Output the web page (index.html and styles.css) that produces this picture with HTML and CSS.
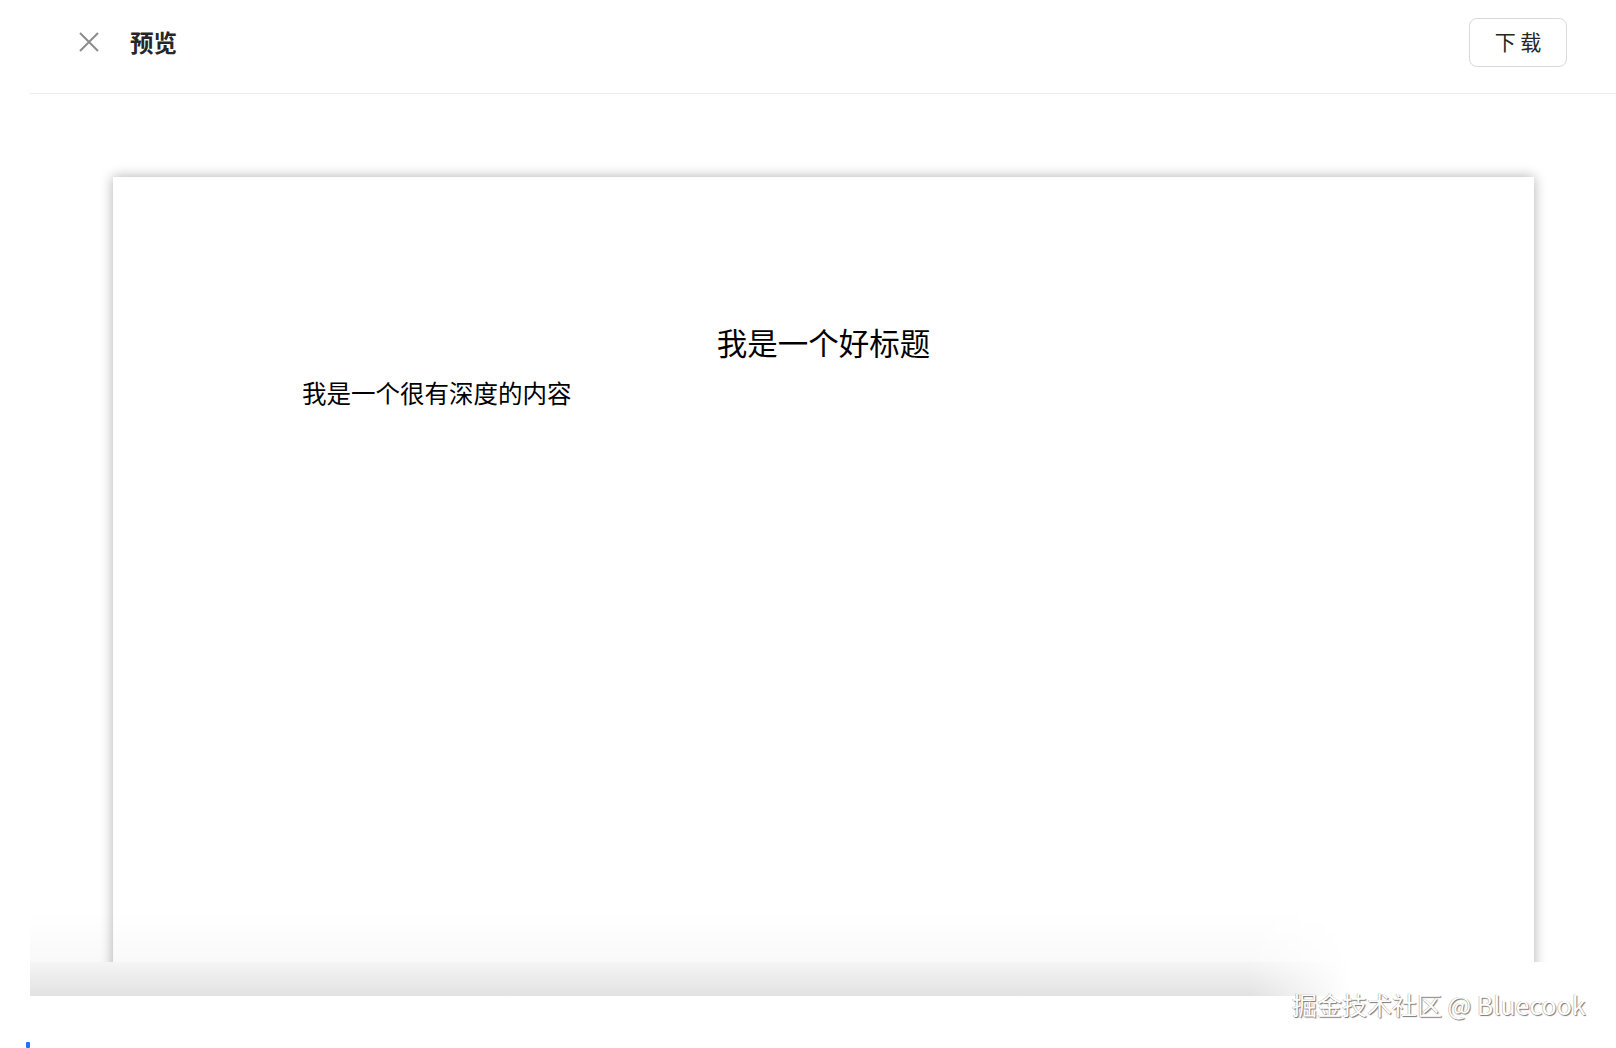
FILE: index.html
```html
<!DOCTYPE html>
<html lang="zh-CN">
<head>
  <meta charset="UTF-8">
  <title>预览</title>
  <link rel="stylesheet" href="styles.css">
</head>
<body>
  <div class="drawer">
    <header class="drawer-head">
      <div class="head-left">
        <button class="close" aria-label="关闭">
          <svg width="20" height="20" viewBox="0 0 20 20"><path d="M1 1L19 19M19 1L1 19" stroke="#8c8c8c" stroke-width="2" fill="none"/></svg>
        </button>
        <span class="title">预览</span>
      </div>
      <button class="download">下 载</button>
    </header>
    <main class="drawer-body">
      <div class="paper">
        <h1>我是一个好标题</h1>
        <p>我是一个很有深度的内容</p>
      </div>
    </main>
    <div class="drawer-foot"></div>
  </div>
  <div class="watermark">掘金技术社区 @ Bluecook</div>
  <span class="blue-mark"></span>
</body>
</html>
```

FILE: styles.css
```css
* { margin: 0; padding: 0; box-sizing: border-box; }
body {
  font-family: "Noto Sans CJK SC", "Noto Sans", sans-serif;
  background: #fff;
  color: #000;
  width: 1616px;
  height: 1048px;
  overflow: hidden;
  position: relative;
}
.drawer {
  margin-left: 30px;
}
.drawer-head {
  height: 94px;
  display: flex;
  align-items: center;
  justify-content: space-between;
  padding: 0 49px 9px 49px;
  border-bottom: 1px solid #ededed;
}
.head-left {
  display: flex;
  align-items: center;
  gap: 31px;
}
.close {
  border: none;
  background: none;
  display: flex;
  cursor: pointer;
}
.title {
  font-size: 23.5px;
  font-weight: bold;
  color: #262626;
}
.download {
  width: 98px;
  height: 49px;
  border: 1.5px solid #d9d9d9;
  border-radius: 8px;
  background: #fff;
  font-family: inherit;
  font-size: 21px;
  color: #262626;
  cursor: pointer;
  padding-bottom: 2px;
}
.drawer-body {
  height: 868px;
  overflow: hidden;
  padding: 83px 82px 0 83px;
  position: relative;
}
.drawer-body::after {
  content: "";
  position: absolute;
  left: 0;
  right: 0;
  bottom: 0;
  height: 50px;
  background: linear-gradient(rgba(0,0,0,0), rgba(0,0,0,0.025));
  -webkit-mask-image: linear-gradient(to right, #000 1220px, transparent 1320px);
  mask-image: linear-gradient(to right, #000 1220px, transparent 1320px);
}
.paper {
  background: #fff;
  min-height: 900px;
  box-shadow: 0 0 12px rgba(0,0,0,0.32);
  padding: 143px 189px 0 189px;
}
.paper h1 {
  font-size: 30.5px;
  font-weight: normal;
  text-align: center;
  line-height: 44px;
  margin-left: -189px;
  margin-right: -189px;
}
.paper p {
  font-size: 24.5px;
  line-height: 36px;
  margin-top: 11px;
}
.drawer-foot {
  height: 34px;
  background: linear-gradient(#f5f5f5, #e2e2e2);
  -webkit-mask-image: linear-gradient(to right, #000 1220px, transparent 1320px);
  mask-image: linear-gradient(to right, #000 1220px, transparent 1320px);
}
.watermark {
  position: absolute;
  left: 1292px;
  top: 986px;
  font-size: 25px;
  color: #fff;
  text-shadow: 1px 1px 1px #777, -0.5px -0.5px 0 #aaa;
}
.blue-mark {
  position: absolute;
  left: 26px;
  top: 1042px;
  width: 4px;
  height: 6px;
  background: #1677ff;
  border-radius: 1px;
}
```
